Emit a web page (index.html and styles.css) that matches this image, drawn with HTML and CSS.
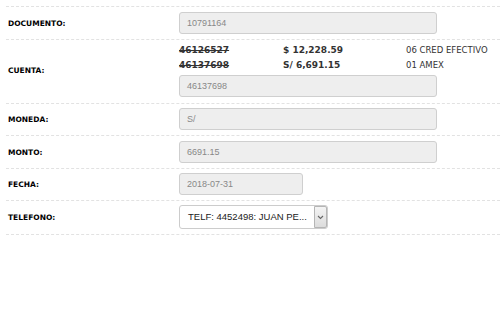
FILE: index.html
```html
<!DOCTYPE html>
<html lang="es">

<head>
    <meta charset="UTF-8">
    <title>Pago</title>
    <link rel="stylesheet" href="styles.css">
</head>

<body>
    <div class="form">
        <div class="row">
            <label class="label">DOCUMENTO:</label>
            <div class="field"><div class="input">10791164</div></div>
        </div>

        <div class="row row-cuenta">
            <label class="label">CUENTA:</label>
            <div class="field">
                <div class="cuentas">
                    <span class="num">46126527</span>
                    <span class="amount">$ 12,228.59</span>
                    <span class="desc">06 CRED EFECTIVO</span>
                    <span class="num">46137698</span>
                    <span class="amount">S/ 6,691.15</span>
                    <span class="desc">01 AMEX</span>
                </div>
                <div class="input">46137698</div>
            </div>
        </div>

        <div class="row row-tight">
            <label class="label">MONEDA:</label>
            <div class="field"><div class="input">S/</div></div>
        </div>

        <div class="row">
            <label class="label">MONTO:</label>
            <div class="field"><div class="input">6691.15</div></div>
        </div>

        <div class="row row-tight">
            <label class="label">FECHA:</label>
            <div class="field"><div class="input input-short">2018-07-31</div></div>
        </div>

        <div class="row row-tight">
            <label class="label">TELEFONO:</label>
            <div class="field">
                <div class="select">
                    <span class="select-text">TELF: 4452498: JUAN PE...</span>
                    <span class="select-btn">
                        <svg width="7" height="5" viewBox="0 0 7 5">
                            <path d="M1 1 L3.5 3.5 L6 1" fill="none" stroke="#666" stroke-width="1.1"/>
                        </svg>
                    </span>
                </div>
            </div>
        </div>
    </div>
</body>

</html>
```

FILE: styles.css
```css
body {
    margin: 0;
    padding: 0;
    background: #fff;
    font-family: "DejaVu Sans", Verdana, sans-serif;
    color: #222;
}

.form {
    margin: 6px 0 0 6px;
    border-top: 1px dashed #e2e2e2;
}

.row {
    display: grid;
    grid-template-columns: 173px 1fr;
    align-items: center;
    padding: 5px 0;
    border-bottom: 1px dashed #e2e2e2;
}

.row-tight {
    padding-top: 4px;
}

.label {
    padding-left: 2px;
    font-size: 7.5px;
    font-weight: bold;
    color: #000;
}

.row-cuenta {
    padding-top: 3px;
    padding-bottom: 6px;
}

.cuentas {
    display: grid;
    grid-template-columns: 104px 123px 1fr;
    line-height: 15px;
    margin-bottom: 2px;
}

.num {
    font-size: 9px;
    font-weight: bold;
    color: #333;
    text-decoration: line-through;
}

.amount {
    font-size: 9px;
    font-weight: bold;
    color: #333;
}

.desc {
    font-size: 8.5px;
    color: #333;
}

.input {
    box-sizing: border-box;
    width: 258px;
    height: 22px;
    padding: 0 7px;
    border: 1px solid #cfcfcf;
    border-radius: 3px;
    background: #eee;
    font-family: "Liberation Sans", Arial, sans-serif;
    font-size: 9px;
    line-height: 20px;
    color: #888;
}

.input-short {
    width: 124px;
}

.select {
    box-sizing: border-box;
    display: flex;
    width: 149px;
    height: 24px;
    border: 1px solid #ccc;
    border-radius: 3px;
    background: #fff;
}

.select-text {
    flex: 1;
    padding-left: 8px;
    font-family: "Liberation Sans", Arial, sans-serif;
    font-size: 9.5px;
    line-height: 22px;
    color: #222;
    white-space: nowrap;
    overflow: hidden;
}

.select-btn {
    box-sizing: border-box;
    display: flex;
    align-items: center;
    justify-content: center;
    width: 13px;
    border: 1px solid #b5b5b5;
    border-radius: 0 2px 2px 0;
    background: linear-gradient(#f4f4f4, #dcdcdc);
}
```
